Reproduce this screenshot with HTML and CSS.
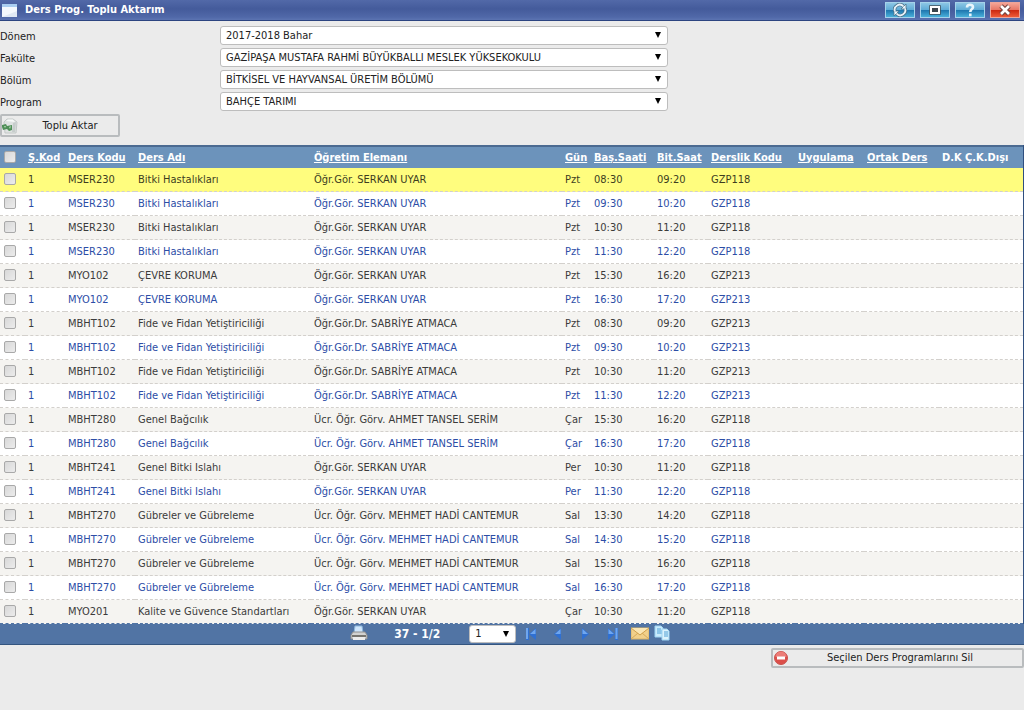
FILE: index.html
```html
<!DOCTYPE html>
<html lang="tr">
<head>
<meta charset="utf-8">
<title>Ders Prog. Toplu Aktarım</title>
<link rel="stylesheet" href="styles.css">
</head>
<body>
<header class="titlebar">
  <svg class="app-icon" viewBox="0 0 16 16" aria-hidden="true"><rect x="1" y="2" width="15" height="13" fill="#f4f8fd"/><rect x="1" y="2" width="15" height="3" fill="#a9cdf0"/><path d="M1 15h15V9z" fill="#dfe8f4"/></svg>
  <h1 class="title">Ders Prog. Toplu Aktarım</h1>
  <div class="window-buttons">
    <button type="button" class="win-btn" aria-label="Yenile"><svg viewBox="0 0 14 14"><g fill="none" stroke="#4a7189" stroke-width="3.400"><path d="M2 8.500A5 5 0 0 1 10.500 3.500M12 5.500A5 5 0 0 1 3.500 10.500"/></g><path d="M8 6h5V1zM6 8H1v5z" fill="#eef6fb" stroke="#4a7189" stroke-width=".8"/><path d="M2 8.500A5 5 0 0 1 10.500 3.500M12 5.500A5 5 0 0 1 3.500 10.500" fill="none" stroke="#e8f3fa" stroke-width="1.800"/></svg></button>
    <button type="button" class="win-btn" aria-label="Büyüt"><svg viewBox="0 0 14 14"><rect x="3" y="4" width="8" height="6" fill="none" stroke="#45565f" stroke-width="3.600"/><rect x="3" y="4" width="8" height="6" fill="#3b454c" stroke="#fff" stroke-width="2"/></svg></button>
    <button type="button" class="win-btn" aria-label="Yardım"><svg viewBox="0 0 14 14"><g fill="none" stroke="#e8f5fc" stroke-width="2.600"><path d="M4 4.500C4 .8 10.200 1 10 4.200C9.900 6.200 7.300 6.200 7.300 9"/><path d="M7.300 10.500v2.800"/></g></svg></button>
    <button type="button" class="win-btn win-close" aria-label="Kapat"><svg viewBox="0 0 14 14"><path d="M3 3l8 8M11 3l-8 8" stroke="#74453f" stroke-width="4.800"/><path d="M3 3l8 8M11 3l-8 8" stroke="#fff" stroke-width="2.600"/></svg></button>
  </div>
</header>
<main>
<form class="filters">
  <label for="donem">Dönem</label>
  <span class="select"><select id="donem"><option>2017-2018 Bahar</option></select><svg viewBox="0 0 6 6"><path d="M0 0h6L3 6z"/></svg></span>
  <label for="fakulte">Fakülte</label>
  <span class="select"><select id="fakulte"><option>GAZİPAŞA MUSTAFA RAHMİ BÜYÜKBALLI MESLEK YÜKSEKOKULU</option></select><svg viewBox="0 0 6 6"><path d="M0 0h6L3 6z"/></svg></span>
  <label for="bolum">Bölüm</label>
  <span class="select"><select id="bolum"><option>BİTKİSEL VE HAYVANSAL ÜRETİM BÖLÜMÜ</option></select><svg viewBox="0 0 6 6"><path d="M0 0h6L3 6z"/></svg></span>
  <label for="program">Program</label>
  <span class="select"><select id="program"><option>BAHÇE TARIMI</option></select><svg viewBox="0 0 6 6"><path d="M0 0h6L3 6z"/></svg></span>
</form>
<button type="button" class="action transfer">
  <svg viewBox="0 0 16 16" aria-hidden="true"><path d="M2 4l3-3h6l4 3-1 11H3z" fill="#dfe3e2" stroke="#c3c8c7"/><path d="M4 3l2-1.500h5L13 4z" fill="#f7f9f8"/><path d="M11 5l3-1-1 10h-3z" fill="#c6cccb"/><path d="M0 7l4-1 1 2 5-1v5l-3 1-2-2-4 1-1-3z" fill="#4f8f58"/><path d="M2 8h2l-1 2zM7 9l2-1-1 3z" fill="#b4d9b3"/></svg>
  <span>Toplu Aktar</span>
</button>
<table class="grid">
  <colgroup><col class="c-check"><col class="c-kod"><col class="c-ders"><col class="c-adi"><col class="c-hoca"><col class="c-gun"><col class="c-bas"><col class="c-bit"><col class="c-derslik"><col class="c-uyg"><col class="c-ortak"><col class="c-disi"></colgroup>
  <thead><tr><th><input type="checkbox" aria-label="Tümünü seç"></th><th><a href="#">Ş.Kod</a></th><th><a href="#">Ders Kodu</a></th><th><a href="#">Ders Adı</a></th><th><a href="#">Öğretim Elemanı</a></th><th><a href="#">Gün</a></th><th><a href="#">Baş.Saati</a></th><th><a href="#">Bit.Saat</a></th><th><a href="#">Derslik Kodu</a></th><th><a href="#">Uygulama</a></th><th><a href="#">Ortak Ders</a></th><th>D.K Ç.K.Dışı</th></tr></thead>
  <tbody>
  <tr class="active"><td><input type="checkbox" aria-label="Satır 1"></td><td>1</td><td>MSER230</td><td>Bitki Hastalıkları</td><td>Öğr.Gör. SERKAN UYAR</td><td>Pzt</td><td>08:30</td><td>09:20</td><td>GZP118</td><td></td><td></td><td></td></tr>
  <tr><td><input type="checkbox" aria-label="Satır 2"></td><td>1</td><td>MSER230</td><td>Bitki Hastalıkları</td><td>Öğr.Gör. SERKAN UYAR</td><td>Pzt</td><td>09:30</td><td>10:20</td><td>GZP118</td><td></td><td></td><td></td></tr>
  <tr><td><input type="checkbox" aria-label="Satır 3"></td><td>1</td><td>MSER230</td><td>Bitki Hastalıkları</td><td>Öğr.Gör. SERKAN UYAR</td><td>Pzt</td><td>10:30</td><td>11:20</td><td>GZP118</td><td></td><td></td><td></td></tr>
  <tr><td><input type="checkbox" aria-label="Satır 4"></td><td>1</td><td>MSER230</td><td>Bitki Hastalıkları</td><td>Öğr.Gör. SERKAN UYAR</td><td>Pzt</td><td>11:30</td><td>12:20</td><td>GZP118</td><td></td><td></td><td></td></tr>
  <tr><td><input type="checkbox" aria-label="Satır 5"></td><td>1</td><td>MYO102</td><td>ÇEVRE KORUMA</td><td>Öğr.Gör. SERKAN UYAR</td><td>Pzt</td><td>15:30</td><td>16:20</td><td>GZP213</td><td></td><td></td><td></td></tr>
  <tr><td><input type="checkbox" aria-label="Satır 6"></td><td>1</td><td>MYO102</td><td>ÇEVRE KORUMA</td><td>Öğr.Gör. SERKAN UYAR</td><td>Pzt</td><td>16:30</td><td>17:20</td><td>GZP213</td><td></td><td></td><td></td></tr>
  <tr><td><input type="checkbox" aria-label="Satır 7"></td><td>1</td><td>MBHT102</td><td>Fide ve Fidan Yetiştiriciliği</td><td>Öğr.Gör.Dr. SABRİYE ATMACA</td><td>Pzt</td><td>08:30</td><td>09:20</td><td>GZP213</td><td></td><td></td><td></td></tr>
  <tr><td><input type="checkbox" aria-label="Satır 8"></td><td>1</td><td>MBHT102</td><td>Fide ve Fidan Yetiştiriciliği</td><td>Öğr.Gör.Dr. SABRİYE ATMACA</td><td>Pzt</td><td>09:30</td><td>10:20</td><td>GZP213</td><td></td><td></td><td></td></tr>
  <tr><td><input type="checkbox" aria-label="Satır 9"></td><td>1</td><td>MBHT102</td><td>Fide ve Fidan Yetiştiriciliği</td><td>Öğr.Gör.Dr. SABRİYE ATMACA</td><td>Pzt</td><td>10:30</td><td>11:20</td><td>GZP213</td><td></td><td></td><td></td></tr>
  <tr><td><input type="checkbox" aria-label="Satır 10"></td><td>1</td><td>MBHT102</td><td>Fide ve Fidan Yetiştiriciliği</td><td>Öğr.Gör.Dr. SABRİYE ATMACA</td><td>Pzt</td><td>11:30</td><td>12:20</td><td>GZP213</td><td></td><td></td><td></td></tr>
  <tr><td><input type="checkbox" aria-label="Satır 11"></td><td>1</td><td>MBHT280</td><td>Genel Bağcılık</td><td>Ücr. Öğr. Görv. AHMET TANSEL SERİM</td><td>Çar</td><td>15:30</td><td>16:20</td><td>GZP118</td><td></td><td></td><td></td></tr>
  <tr><td><input type="checkbox" aria-label="Satır 12"></td><td>1</td><td>MBHT280</td><td>Genel Bağcılık</td><td>Ücr. Öğr. Görv. AHMET TANSEL SERİM</td><td>Çar</td><td>16:30</td><td>17:20</td><td>GZP118</td><td></td><td></td><td></td></tr>
  <tr><td><input type="checkbox" aria-label="Satır 13"></td><td>1</td><td>MBHT241</td><td>Genel Bitki Islahı</td><td>Öğr.Gör. SERKAN UYAR</td><td>Per</td><td>10:30</td><td>11:20</td><td>GZP118</td><td></td><td></td><td></td></tr>
  <tr><td><input type="checkbox" aria-label="Satır 14"></td><td>1</td><td>MBHT241</td><td>Genel Bitki Islahı</td><td>Öğr.Gör. SERKAN UYAR</td><td>Per</td><td>11:30</td><td>12:20</td><td>GZP118</td><td></td><td></td><td></td></tr>
  <tr><td><input type="checkbox" aria-label="Satır 15"></td><td>1</td><td>MBHT270</td><td>Gübreler ve Gübreleme</td><td>Ücr. Öğr. Görv. MEHMET HADİ CANTEMUR</td><td>Sal</td><td>13:30</td><td>14:20</td><td>GZP118</td><td></td><td></td><td></td></tr>
  <tr><td><input type="checkbox" aria-label="Satır 16"></td><td>1</td><td>MBHT270</td><td>Gübreler ve Gübreleme</td><td>Ücr. Öğr. Görv. MEHMET HADİ CANTEMUR</td><td>Sal</td><td>14:30</td><td>15:20</td><td>GZP118</td><td></td><td></td><td></td></tr>
  <tr><td><input type="checkbox" aria-label="Satır 17"></td><td>1</td><td>MBHT270</td><td>Gübreler ve Gübreleme</td><td>Ücr. Öğr. Görv. MEHMET HADİ CANTEMUR</td><td>Sal</td><td>15:30</td><td>16:20</td><td>GZP118</td><td></td><td></td><td></td></tr>
  <tr><td><input type="checkbox" aria-label="Satır 18"></td><td>1</td><td>MBHT270</td><td>Gübreler ve Gübreleme</td><td>Ücr. Öğr. Görv. MEHMET HADİ CANTEMUR</td><td>Sal</td><td>16:30</td><td>17:20</td><td>GZP118</td><td></td><td></td><td></td></tr>
  <tr><td><input type="checkbox" aria-label="Satır 19"></td><td>1</td><td>MYO201</td><td>Kalite ve Güvence Standartları</td><td>Öğr.Gör. SERKAN UYAR</td><td>Çar</td><td>10:30</td><td>11:20</td><td>GZP118</td><td></td><td></td><td></td></tr>
  </tbody>
</table>
<div class="pager">
  <button type="button" class="icon-btn" aria-label="Yazdır"><svg viewBox="0 0 18 18"><path d="M5 1h7l1 7H4z" fill="#cfe6fb" stroke="#8db7dc"/><path d="M3 7h12l2 3v4H1v-4z" fill="#d2d2d0" stroke="#8e8e8e"/><path d="M2 10h14v2H2z" fill="#77756f"/><path d="M3 12h12v3H3z" fill="#ececec"/></svg></button>
  <strong class="count">37 - 1/2</strong>
  <span class="select page-select"><select aria-label="Sayfa"><option>1</option><option>2</option></select><svg viewBox="0 0 6 6"><path d="M0 0h6L3 6z"/></svg></span>
  <div class="nav">
    <button type="button" class="icon-btn" aria-label="İlk"><svg viewBox="0 0 18 18"><path d="M4 3h3v12H4zM14 3v12L7 9z" fill="#2f70d2"/><path d="M4 3h2v11H4zM13.500 4v5H8z" fill="#6fa6ee"/></svg></button>
    <button type="button" class="icon-btn" aria-label="Önceki"><svg viewBox="0 0 18 18"><path d="M12 3v12L5 9z" fill="#2f70d2"/><path d="M11.500 4v5H6z" fill="#6fa6ee"/></svg></button>
    <button type="button" class="icon-btn" aria-label="Sonraki"><svg viewBox="0 0 18 18"><path d="M6 3v12l7-6z" fill="#2f70d2"/><path d="M6.500 4v5H12z" fill="#6fa6ee"/></svg></button>
    <button type="button" class="icon-btn" aria-label="Son"><svg viewBox="0 0 18 18"><path d="M12 3h3v12h-3zM5 3v12l7-6z" fill="#2f70d2"/><path d="M12.500 3h2v11h-2zM5.500 4v5H11z" fill="#6fa6ee"/></svg></button>
  </div>
  <div class="tools">
    <button type="button" class="icon-btn" aria-label="E-posta"><svg viewBox="0 0 18 18"><path d="M0 3h18v11H0z" fill="#f1d08a" stroke="#d9b468"/><path d="M0 14l7-6M18 14l-7-6" stroke="#d4a95a" fill="none"/><path d="M0 3l9 7 9-7" fill="#fae6b4" stroke="#cfa14d"/></svg></button>
    <button type="button" class="icon-btn" aria-label="Kopyala"><svg viewBox="0 0 18 18"><path d="M1 1h6l2 2v9H1z" fill="#c9ebfc" stroke="#9fd4f2"/><path d="M3 4h4M3 6h5M3 8h5" stroke="#4f9fd4"/><path d="M8 4h5l2 2v9H8z" fill="#dcf3fd" stroke="#9fd4f2"/><path d="M10 7h4M10 9h4M10 11h4" stroke="#4f9fd4"/></svg></button>
  </div>
</div>
<div class="footer">
  <button type="button" class="action delete">
    <svg viewBox="0 0 16 16" aria-hidden="true"><circle cx="7" cy="8" r="6.500" fill="#dc4f4a" stroke="#c9534e"/><path d="M1.500 7a5.500 5.500 0 0 1 11 0z" fill="#ec7d78"/><path d="M3 6.500h8v3H3z" fill="#fff"/></svg>
    <span>Seçilen Ders Programlarını Sil</span>
  </button>
</div>
</main>
</body>
</html>
```
FILE: styles.css
```css
* { box-sizing: border-box; }
body {
  margin: 0;
  min-height: 100vh;
  background: #ebebeb;
  color: #222;
  font: 11px/16px "DejaVu Sans Condensed", "Noto Sans", sans-serif;
}
button, select { font: inherit; color: inherit; }
svg { display: block; }

.titlebar {
  display: flex;
  align-items: center;
  height: 21px;
  padding: 0 4px 1px 1px;
  background: linear-gradient(#5269a8, #445b9b 45%, #5068a8 85%, #5c74b2);
  border-bottom: 1px solid #2c4480;
}
.app-icon { width: 16px; height: 16px; }
.title { flex: 1; margin: 0 0 0 8px; color: #fff; font-size: 11px; line-height: 16px; }
.window-buttons { display: flex; gap: 5px; }
.win-btn {
  display: grid;
  place-items: center;
  width: 30px;
  height: 16px;
  padding: 0;
  border: 1px solid #a5d2ea;
  background: linear-gradient(#8cc6e4, #5fabd6 48%, #1f76ae 52%, #48b0da);
}
.win-btn svg { width: 14px; height: 14px; }
.win-close {
  border-color: #eda59a;
  background: linear-gradient(#f5a596, #e87766 48%, #cc2810 52%, #ee5a38);
}

.filters {
  display: grid;
  grid-template-columns: 220px minmax(0, 448px);
  row-gap: 3px;
  padding-top: 5px;
}
.filters label { padding-top: 3px; line-height: 16px; }
.select { position: relative; display: block; }
.select select {
  appearance: none;
  display: block;
  width: 100%;
  height: 19px;
  padding: 0 20px 0 5px;
  border: 1px solid #bdbdbd;
  border-radius: 3px;
  background: #fff;
}
.select svg {
  position: absolute;
  top: 6px;
  right: 7px;
  width: 6px;
  height: 6px;
  pointer-events: none;
}

.action {
  display: flex;
  align-items: center;
  padding: 0 2px;
  border: 2px solid #b9bcbe;
  border-radius: 2px;
  background: #ebebeb;
}
.action svg { width: 16px; height: 16px; }
.action span { flex: 1; text-align: center; }
.transfer { width: 120px; height: 23px; margin: 3px 0 8px; padding: 0; }
.transfer span { padding-left: 4px; }

.grid {
  width: 100%;
  table-layout: fixed;
  border-collapse: separate;
  border-spacing: 0;
  border-right: 1px solid #2f4f7f;
}
.c-check { width: 25px; }
.c-kod { width: 40px; }
.c-ders { width: 70px; }
.c-adi { width: 17.2%; }
.c-gun { width: 29px; }
.c-bas { width: 63px; }
.c-bit { width: 54px; }
.c-derslik { width: 87px; }
.c-uyg { width: 69px; }
.c-ortak { width: 75px; }
.c-disi { width: 84px; }
.grid th, .grid td {
  padding: 0 0 0 3px;
  text-align: left;
  white-space: nowrap;
  vertical-align: middle;
}
.grid th {
  height: 23px;
  border-top: 2px solid #4b6a91;
  background: #6c93bb;
  color: #fff;
}
.grid th a { color: #fff; }
.grid td {
  height: 24px;
  border-bottom: 1px dashed #d3d0cc;
  background: #f5f4f1;
  color: #3b3b3b;
}
.grid tr:nth-child(even) td { background: #fff; color: #2c4da6; }
.grid .active td { background: #fffd7e; color: #3d3d1e; }
.grid tr:last-child td { border-bottom-color: #5174a4; }
.grid input {
  appearance: none;
  display: block;
  width: 12px;
  height: 12px;
  margin: 0 0 2px 1px;
  border: 1px solid #a9a9a9;
  border-radius: 2px;
  background: linear-gradient(135deg, #d8d8d8, #ececec);
}
.grid input:checked { background: #4b6a91; }

.pager {
  display: flex;
  align-items: center;
  height: 21px;
  padding-left: 34.2%;
  border-bottom: 1px solid #34557f;
  background: #5174a4;
}
.icon-btn { padding: 0; border: 0; background: none; }
.icon-btn svg { width: 18px; height: 18px; }
.count { width: 82px; margin-left: 8px; padding-left: 18px; color: #fff; font-size: 12px; line-height: 16px; white-space: nowrap; }
.page-select { width: 47px; margin-left: 11px; }
.page-select select { height: 18px; }
.nav { display: flex; gap: 9px; margin-left: 6px; }
.tools { display: flex; gap: 5px; margin-left: 10px; }

.footer { display: flex; justify-content: flex-end; padding-top: 3px; }
.delete { width: 253px; height: 20px; padding: 0 12px 0 1px; }
```
